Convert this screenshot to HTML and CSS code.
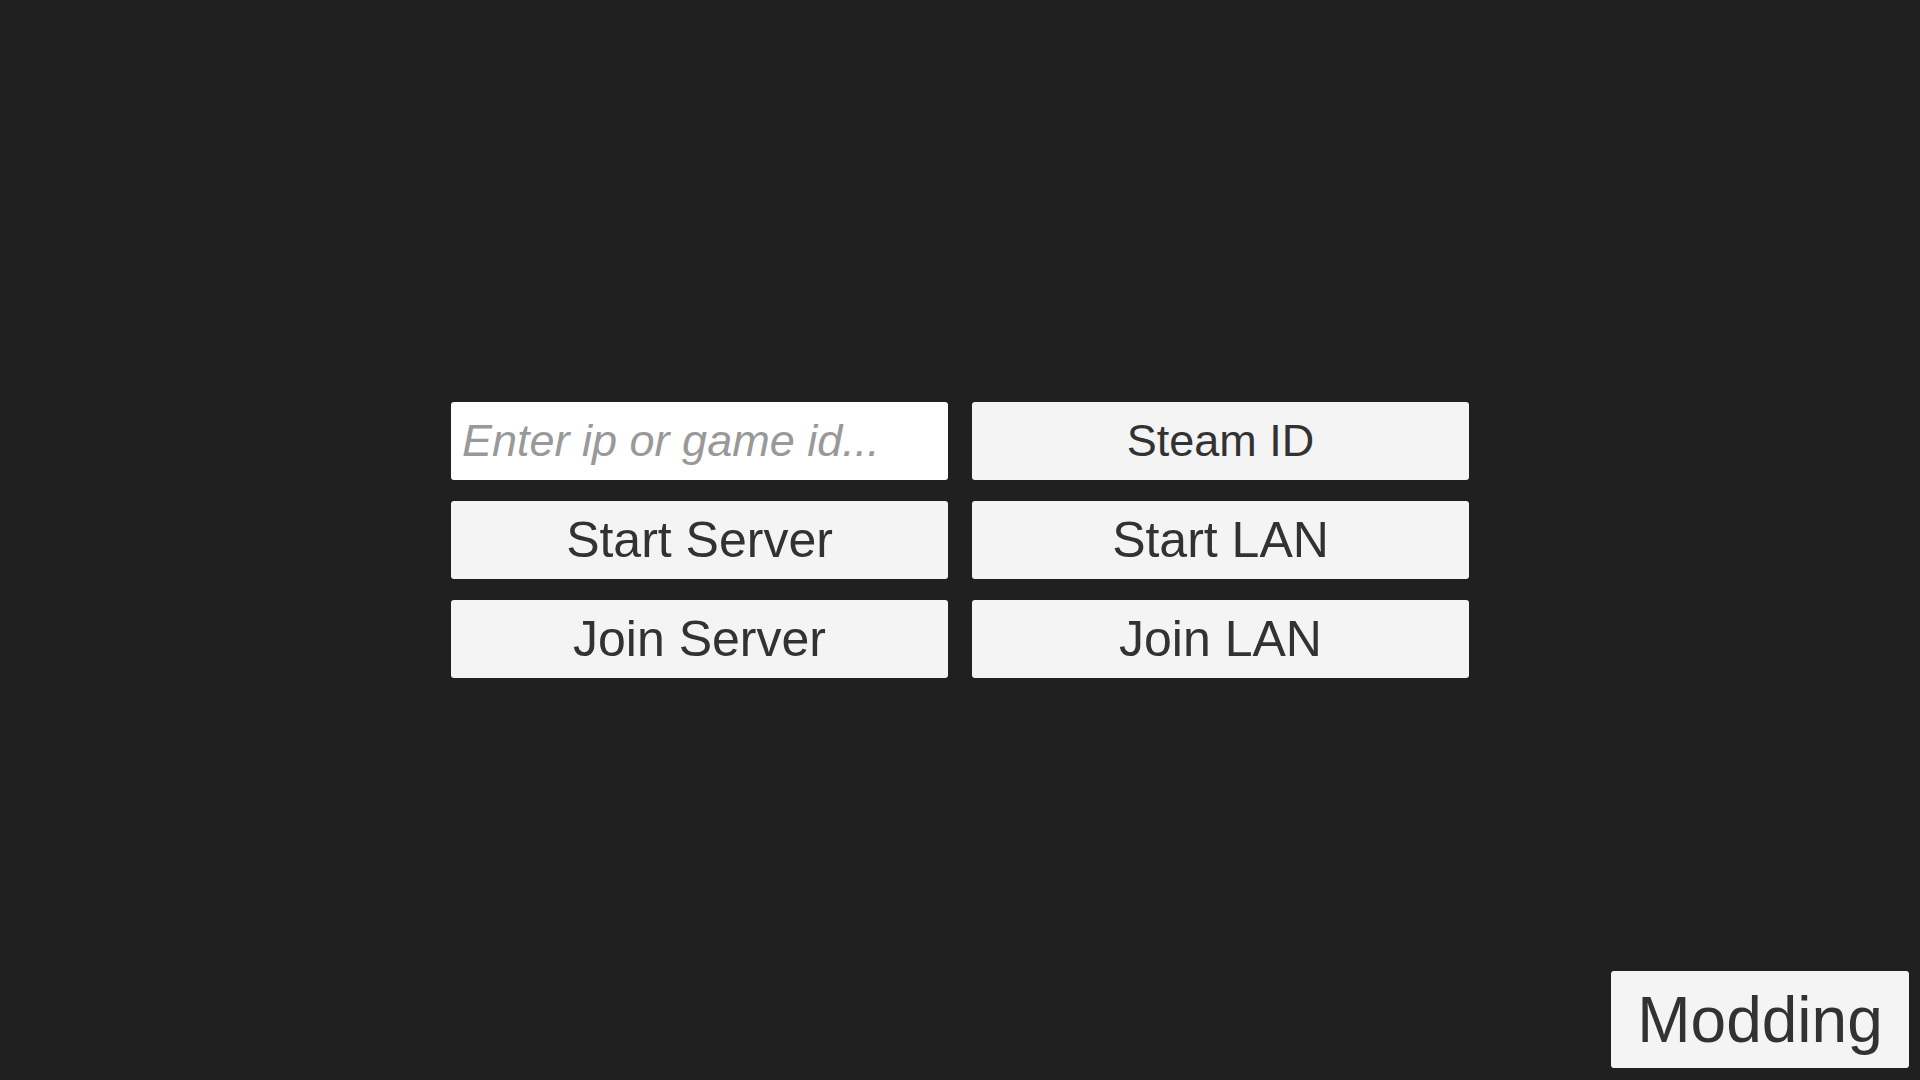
FILE: index.html
```html
<!DOCTYPE html>
<html lang="en">
<head>
    <meta charset="UTF-8">
    <meta name="viewport" content="width=device-width, initial-scale=1.0">
    <title>Multiplayer</title>
    <link rel="stylesheet" href="styles.css">
</head>
<body>

    <div class="screen">
        <div class="menu">
            <input type="text" id="address" class="address" placeholder="Enter ip or game id...">
            <button class="small">Steam ID</button>
            <button>Start Server</button>
            <button>Start LAN</button>
            <button>Join Server</button>
            <button>Join LAN</button>
        </div>

        <button class="modding">Modding</button>
    </div>

</body>
</html>
```

FILE: styles.css
```css
body {
    margin: 0;
    padding: 0;
    background-color: #202020;
    font-family: "Liberation Sans", Arial, sans-serif;
}

.screen {
    height: 100vh;
    display: grid;
    grid-template-rows: 1fr auto 1fr;
}

.menu {
    grid-row: 2;
    justify-self: center;
    display: grid;
    grid-template-columns: 497px 497px;
    grid-auto-rows: 78px;
    gap: 21px 24px;
}

button {
    background-color: #f4f4f4;
    color: #323232;
    font-family: inherit;
    font-size: 50px;
    border: none;
    border-radius: 3px;
    padding: 0;
    cursor: pointer;
}

button.small {
    font-size: 45px;
}

.address {
    background-color: #fff;
    color: #323232;
    font-family: inherit;
    font-size: 45px;
    border: none;
    border-radius: 3px;
    padding: 0 11px;
    outline: none;
}

.address::placeholder {
    color: #999;
    font-style: italic;
}

.modding {
    grid-row: 3;
    align-self: end;
    justify-self: end;
    width: 298px;
    height: 97px;
    margin: 0 11px 12px 0;
    font-size: 64px;
}
```
